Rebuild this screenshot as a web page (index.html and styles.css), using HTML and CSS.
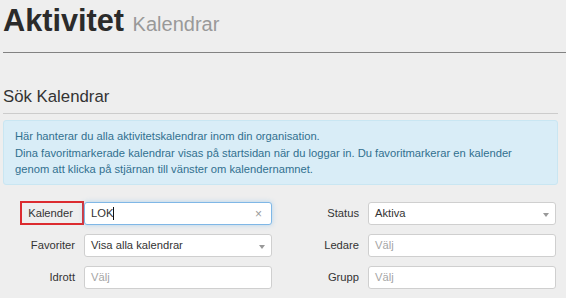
FILE: index.html
```html
<!DOCTYPE html>
<html lang="sv">
<head>
<meta charset="utf-8">
<title>Aktivitet Kalendrar</title>
<link rel="stylesheet" href="styles.css">
</head>
<body>
<header class="page-header">
  <h1 class="title">Aktivitet <small class="subtitle">Kalendrar</small></h1>
</header>
<h2 class="section-title">Sök Kalendrar</h2>
<div class="info">
  Här hanterar du alla aktivitetskalendrar inom din organisation.<br>
  Dina favoritmarkerade kalendrar visas på startsidan när du loggar in. Du favoritmarkerar en kalender<br>
  genom att klicka på stjärnan till vänster om kalendernamnet.
</div>
<form class="search-form">
  <label class="lbl"><span class="lbl-mark">Kalender</span></label>
  <div class="field focus"><span class="val">LOK</span><span class="caret"></span><span class="clear">×</span></div>
  <label class="lbl">Status</label>
  <div class="field select"><span class="val">Aktiva</span><span class="arrow"></span></div>

  <label class="lbl">Favoriter</label>
  <div class="field select"><span class="val">Visa alla kalendrar</span><span class="arrow"></span></div>
  <label class="lbl">Ledare</label>
  <div class="field"><span class="ph">Välj</span></div>

  <label class="lbl">Idrott</label>
  <div class="field"><span class="ph">Välj</span></div>
  <label class="lbl">Grupp</label>
  <div class="field"><span class="ph">Välj</span></div>
</form>
</body>
</html>
```

FILE: styles.css
```css
html, body {
  margin: 0;
  padding: 0;
}
body {
  background: #eeeeee;
  font-family: "Liberation Sans", Arial, sans-serif;
  color: #333333;
  width: 566px;
  height: 298px;
  overflow: hidden;
}
.page-header {
  margin-left: 3px;
  height: 52px;
  border-bottom: 1px solid #828282;
}
.title {
  margin: 0;
  font-size: 30.7px;
  line-height: 41px;
  font-weight: bold;
  color: #2b2b2b;
  white-space: nowrap;
}
.subtitle {
  font-size: 20px;
  font-weight: normal;
  color: #999999;
}
.section-title {
  margin: 34px 8px 0 3px;
  font-size: 16.8px;
  line-height: 20px;
  font-weight: normal;
  color: #333333;
  padding-bottom: 6px;
  border-bottom: 1px solid #cccccc;
}
.info {
  margin: 6px 8px 0 3px;
  padding: 7px 11px 6px;
  background: #d9edf7;
  border: 1px solid #c9e6f2;
  border-radius: 3px;
  color: #31708f;
  font-size: 11.2px;
  line-height: 16.5px;
}
.search-form {
  margin: 17px 0 0 3px;
  display: grid;
  grid-template-columns: 72px 188px 78px 188px;
  grid-auto-rows: 23px;
  column-gap: 9px;
  row-gap: 9px;
  font-size: 11.2px;
}
.lbl {
  display: flex;
  align-items: center;
  justify-content: flex-end;
  color: #333333;
}
.lbl-mark {
  box-sizing: border-box;
  height: 24px;
  margin-top: -1px;
  margin-right: -9px;
  padding: 0 9px 0 6px;
  border: 2px solid #dc2b2f;
  display: flex;
  align-items: center;
}
.field {
  position: relative;
  box-sizing: border-box;
  background: #ffffff;
  border: 1px solid #cfcfcf;
  border-radius: 3px;
  display: flex;
  align-items: center;
  padding-left: 6px;
}
.field.focus {
  border-color: #7fb7e6;
  box-shadow: 0 0 5px rgba(102, 175, 233, 0.45);
}
.val {
  color: #333333;
}
.ph {
  color: #a5a5a5;
}
.caret {
  width: 1px;
  height: 13px;
  background: #111111;
  margin-left: 0;
}
.clear {
  position: absolute;
  right: 9px;
  top: 4px;
  font-size: 12px;
  color: #9a9a9a;
}
.arrow {
  position: absolute;
  right: 6px;
  top: 10px;
  width: 0;
  height: 0;
  border-left: 3px solid transparent;
  border-right: 3px solid transparent;
  border-top: 4px solid #999999;
}
```
